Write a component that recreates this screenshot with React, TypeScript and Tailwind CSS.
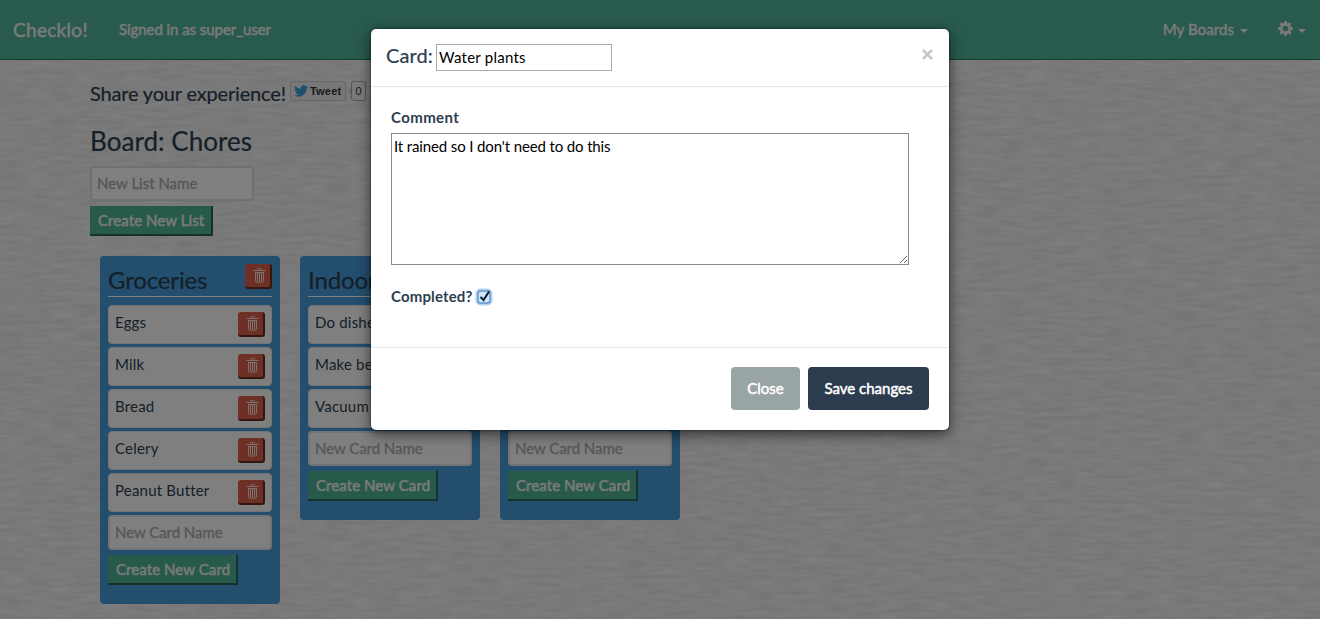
import type { ReactNode } from "react";

const strong = "[-webkit-text-stroke:0.5px_currentColor]";
const medium = "[-webkit-text-stroke:0.2px_currentColor]";

function TrashIcon() {
  return (
    <svg width="13" height="15" viewBox="0 0 13 15" fill="none" stroke="#f4e4e0" strokeWidth="1">
      <path d="M4.5 2.5v-1.2q0-.8.8-.8h2.4q.8 0 .8.8v1.2M.5 2.5h12M2.5 4.5h8M2.5 4v8.8q0 1.2 1.2 1.2h5.6q1.2 0 1.2-1.2V4M4.5 5v8M6.5 5v8M8.5 5v8" />
    </svg>
  );
}

function DeleteButton() {
  return (
    <button className="flex h-[25px] w-[27px] items-start justify-end rounded-[3px] border-r-2 border-b-2 border-[#662c22] bg-[#dc6048] pt-[4px] pr-[4px]">
      <TrashIcon />
    </button>
  );
}

function CreateButton({ children, width }: { children: ReactNode; width: string }) {
  return (
    <button
      className={`flex h-[30px] ${width} items-center border-r-2 border-b-2 border-[#286450] bg-[#50b496] pl-2 text-[15px] leading-none tracking-[0.08px] whitespace-nowrap text-[#f0f4f2] ${strong}`}
    >
      {children}
    </button>
  );
}

function NewCard() {
  return (
    <>
      <input
        placeholder="New Card Name"
        className="block h-[35px] w-full rounded-[4px] border-2 border-[#e2e6ec] bg-white px-[5px] pb-[2px] text-[15px] tracking-[-0.05px] [-webkit-text-stroke:0.3px_currentColor] placeholder:text-[#a9adb4]"
      />
      <div className="mt-[5px]">
        <CreateButton width="w-[130px]">Create New Card</CreateButton>
      </div>
    </>
  );
}

function List({ title, cards }: { title: string; cards: string[] }) {
  return (
    <section className="w-[180px] shrink-0 rounded-[4px] bg-[#469cdc] px-2 pt-[8px] pb-[19px]">
      <header className="mb-[8px] flex h-[33px] justify-between border-b border-white">
        <h3 className={`pt-[4px] text-[24px] leading-[24px] tracking-[-0.15px] whitespace-nowrap text-[#2c3e50] ${medium}`}>
          {title}
        </h3>
        <DeleteButton />
      </header>
      {cards.map((card) => (
        <div
          key={card}
          className="mb-[3px] flex h-[39px] justify-between rounded-[4px] border border-[#e8e8e8] bg-white pr-[6px] pl-[6px]"
        >
          <span className="pt-[7px] text-[15px] leading-[18px] tracking-[0.2px] text-[#2c3e50]">{card}</span>
          <div className="pt-[6px]">
            <DeleteButton />
          </div>
        </div>
      ))}
      <NewCard />
    </section>
  );
}

function Caret() {
  return <span className="mt-[3px] border-x-4 border-t-4 border-x-transparent border-t-current" />;
}

function PaperTexture() {
  return (
    <svg className="absolute inset-0 h-full w-full" aria-hidden="true">
      <filter id="paper" x="0" y="0" width="100%" height="100%" colorInterpolationFilters="sRGB">
        <feTurbulence type="fractalNoise" baseFrequency="0.04 0.24" numOctaves="3" seed="4" />
        <feColorMatrix values="0.12 0 0 0 0.89  0.12 0 0 0 0.89  0.12 0 0 0 0.89  0 0 0 0 1" />
      </filter>
      <rect width="100%" height="100%" filter="url(#paper)" />
    </svg>
  );
}

function Navbar() {
  return (
    <nav className="flex h-[60px] items-center border-b border-[#2d7860] bg-[#50b49a] pr-[14px] pl-[13px] text-[#f0f4f2]">
      <span className={`w-[106px] text-[19px] leading-none tracking-[0.3px] ${strong}`}>Checklo!</span>
      <span className={`grow text-[15px] leading-none tracking-[-0.06px] ${strong}`}>Signed in as super_user</span>
      <div className={`mr-[30px] flex items-center gap-[6px] text-[15px] leading-none tracking-[0.08px] ${strong}`}>
        My Boards
        <Caret />
      </div>
      <div className="flex items-center gap-[5px]">
        <svg className="mb-[2px]" width="15" height="15" viewBox="0 0 16 16" fill="currentColor">
          <path
            fillRule="evenodd"
            d="M6.8 0h2.4l.4 2.1 1.2.5 1.8-1.2 1.8 1.8-1.2 1.8.5 1.2 2.3.6v2.4l-2.3.6-.5 1.2 1.2 1.8-1.8 1.8-1.8-1.2-1.2.5L9.2 16H6.8l-.4-2.1-1.2-.5-1.8 1.2-1.8-1.8L2.8 11l-.5-1.2L0 9.2V6.8l2.3-.6L2.8 5 1.6 3.2l1.8-1.8 1.8 1.2 1.2-.5ZM8 5a3 3 0 1 0 0 6 3 3 0 0 0 0-6Z"
          />
        </svg>
        <Caret />
      </div>
    </nav>
  );
}

function TweetButton() {
  return (
    <div className="flex h-5 items-center font-['Liberation_Sans',sans-serif] text-[11px] leading-none text-[#333]">
      <div className="flex h-5 w-[56px] items-center gap-[2px] rounded-[3px] border border-[#ccc] bg-[#eee] pl-[3px] font-bold">
        <svg width="14" height="12" viewBox="0 0 24 20" fill="#3aa3dc">
          <path d="M24 2.4a9.8 9.8 0 0 1-2.8.8A4.9 4.9 0 0 0 23.3.5a9.8 9.8 0 0 1-3.1 1.2 4.9 4.9 0 0 0-8.4 4.5A14 14 0 0 1 1.7 1.1a4.9 4.9 0 0 0 1.5 6.5A4.9 4.9 0 0 1 1 7a4.9 4.9 0 0 0 3.9 4.9 4.9 4.9 0 0 1-2.2.1 4.9 4.9 0 0 0 4.6 3.4A9.9 9.9 0 0 1 0 17.4a14 14 0 0 0 21.5-12.4A10 10 0 0 0 24 2.4Z" />
        </svg>
        <span className="tracking-[0.2px]">Tweet</span>
      </div>
      <svg className="ml-[3px]" width="3" height="8" viewBox="0 0 3 8" fill="none" stroke="#aaa">
        <path d="M3 0 .5 4 3 8" />
      </svg>
      <div className="-ml-px flex h-5 w-[15px] items-center justify-center rounded-[3px] border border-[#aaa] bg-[#f5f5f5]">
        0
      </div>
    </div>
  );
}

function CardDialog() {
  return (
    <div className="h-[401px] w-[578px] rounded-[5px] bg-white text-[#2c3e50] shadow-[0_4px_14px_rgba(0,0,0,0.6),0_0_2px_rgba(0,0,0,0.7)]">
      <header className="flex h-[58px] items-start border-b border-[#e5e5e5] pr-[14px] pl-[15px]">
        <h4 className={`w-[50px] pt-[14px] text-[20px] leading-[24px] tracking-[0.1px] ${medium}`}>Card:</h4>
        <input
          defaultValue="Water plants"
          className="mt-[15px] h-[27px] w-[176px] border border-[#aaa] px-[2px] pb-[2px] text-[15px] tracking-[0.25px] text-black"
        />
        <button className="mt-[18px] ml-auto flex h-[15px] w-[15px] items-center justify-center">
          <svg width="11" height="11" viewBox="0 0 11 11" stroke="#c8c8c8" strokeWidth="2.6">
            <path d="m1 1 9 9M10 1l-9 9" />
          </svg>
        </button>
      </header>
      <div className="h-[260px] px-[20px] pt-[21px]">
        <label className="block text-[15px] leading-[18px] font-bold tracking-[0.4px]">Comment</label>
        <textarea
          defaultValue="It rained so I don't need to do this"
          className="mt-[7px] block h-[132px] w-[518px] border border-[#8a8a8a] p-[2px] text-[15px] leading-[21px] tracking-[-0.13px] text-black"
        />
        <label className="mt-[21px] flex h-[20px] items-center text-[15px] leading-none font-bold tracking-[0.15px]">
          Completed?
          <svg className="mt-[2px] ml-[2px]" width="18" height="18" viewBox="0 0 18 18" fill="none">
            <rect x=".5" y=".5" width="17" height="17" rx="5" fill="#b3d2f0" />
            <rect x="3" y="3" width="12" height="12" rx="2.5" fill="#cfe5fa" stroke="#6494c8" strokeWidth="1.4" />
            <path d="m5.5 8.8 3 3.3 5.7-8.8" stroke="#0d1d33" strokeWidth="2" />
          </svg>
        </label>
      </div>
      <footer className="flex justify-end gap-2 border-t border-[#e5e5e5] pt-[19px] pr-[20px]">
        <button className={`h-[43px] w-[69px] rounded-[4px] bg-[#98a4a6] text-[15px] text-white ${strong}`}>Close</button>
        <button className={`h-[43px] w-[121px] rounded-[4px] bg-[#2c3b4d] text-[15px] text-white ${strong}`}>
          Save changes
        </button>
      </footer>
    </div>
  );
}

export default function App() {
  return (
    <div className="relative isolate h-[619px] w-[1320px] overflow-hidden bg-[#f2f2f2] font-['Lato',sans-serif]">
      <PaperTexture />
      <div className="relative">
        <Navbar />
        <main className="pl-[90px] text-[#2c3e50]">
          <div className="flex pt-[21px]">
            <p className={`w-[200px] text-[20px] leading-[24px] tracking-[-0.17px] whitespace-nowrap ${medium}`}>
              Share your experience!
            </p>
            <TweetButton />
          </div>
          <h2 className={`mt-[20px] text-[26px] leading-[32px] tracking-[0.05px] ${medium}`}>Board: Chores</h2>
          <input
            placeholder="New List Name"
            className="mt-[9px] block h-[35px] w-[164px] rounded-[3px] border-2 border-[#dce0e6] bg-white px-[5px] pb-[2px] text-[15px] [-webkit-text-stroke:0.3px_currentColor] placeholder:text-[#a9adb4]"
          />
          <div className="mt-[5px]">
            <CreateButton width="w-[123px]">Create New List</CreateButton>
          </div>
          <div className="mt-[20px] flex items-start gap-5 pl-[10px]">
            <List title="Groceries" cards={["Eggs", "Milk", "Bread", "Celery", "Peanut Butter"]} />
            <List title="Indoor" cards={["Do dishes", "Make bed", "Vacuum"]} />
            <List title="Outdoor" cards={["Mow lawn", "Rake leaves", "Water plants"]} />
          </div>
        </main>
      </div>
      <div className="absolute inset-0 flex items-start bg-black/50 pt-[29px] pl-[371px]">
        <CardDialog />
      </div>
    </div>
  );
}
